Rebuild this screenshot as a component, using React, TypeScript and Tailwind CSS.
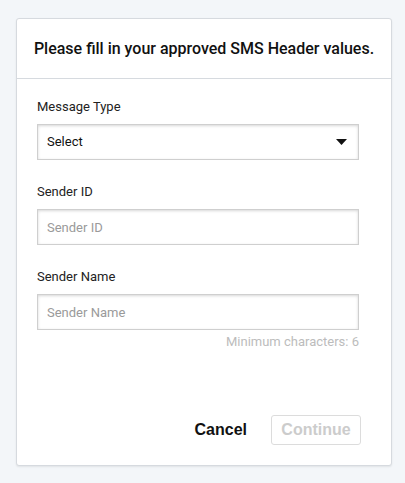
import React from 'react';

const Label: React.FC<{ children: React.ReactNode }> = ({ children }) => (
  <label className="block text-[13px] leading-4 text-[#222]">{children}</label>
);

const fieldClass =
  'mt-[9px] flex h-9 w-[322px] items-center border border-[#cfcfcf] bg-white px-[9px] text-[13px] shadow-[inset_0_1px_3px_rgba(0,0,0,0.16)] outline-none';

export default function App() {
  return (
    <div className="min-h-screen bg-[#f3f6f9] pl-4 pt-[18px] font-['Roboto',sans-serif]">
      <div className="w-[376px] rounded-[3px] border border-[#d6dadf] bg-white shadow-[0_1px_2px_rgba(0,0,0,0.08)]">
        <div className="flex h-[60px] items-center justify-center border-b border-[#d6dadf]">
          <h2 className="text-[16px] font-medium text-[#111]">Please fill in your approved SMS Header values.</h2>
        </div>

        <div className="px-5 pt-[20px]">
          <Label>Message Type</Label>
          <div className={`${fieldClass} justify-between`}>
            <span className="text-[#111]">Select</span>
            <svg width="11" height="6" viewBox="0 0 11 6" className="mr-[2px]">
              <path d="M0 0 L11 0 L5.5 6 Z" fill="#111" />
            </svg>
          </div>

          <div className="mt-6">
            <Label>Sender ID</Label>
            <input className={`${fieldClass} placeholder:text-[#9a9a9a]`} placeholder="Sender ID" />
          </div>

          <div className="mt-6">
            <Label>Sender Name</Label>
            <input className={`${fieldClass} placeholder:text-[#9a9a9a]`} placeholder="Sender Name" />
            <p className="mt-[4px] w-[322px] text-right text-[13px] leading-[16px] text-[#bcbcbc]">Minimum characters: 6</p>
          </div>
        </div>

        <div className="mt-[65px] flex items-center justify-end gap-6 pb-5 pr-[30px] font-['Liberation_Sans',Arial,sans-serif]">
          <button className="text-[16px] font-bold text-[#111]">Cancel</button>
          <button
            disabled
            className="h-[30px] w-[90px] rounded-[3px] border border-[#dcdcdc] text-[16px] font-bold text-[#cccccc]"
          >
            Continue
          </button>
        </div>
      </div>
    </div>
  );
}
